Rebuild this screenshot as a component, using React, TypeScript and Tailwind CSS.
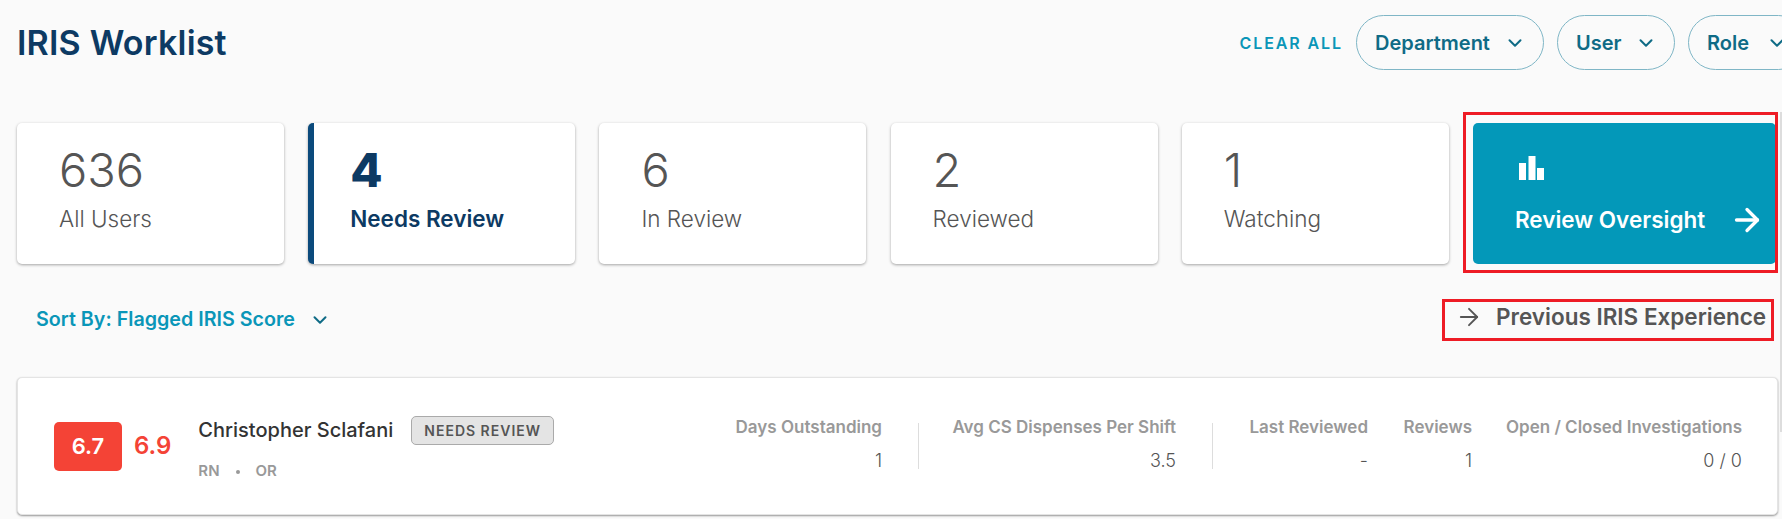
import { ArrowRight, ChevronDown } from "lucide-react";

const font = "font-['Inter','Liberation_Sans',sans-serif]";

const tiles = [
  { count: "636", label: "All Users" },
  { count: "4", label: "Needs Review", active: true },
  { count: "6", label: "In Review" },
  { count: "2", label: "Reviewed" },
  { count: "1", label: "Watching" },
];

const stats = [
  { label: "Days Outstanding", value: "1", width: "w-[200px]", divider: true },
  { label: "Avg CS Dispenses Per Shift", value: "3.5", width: "w-[294px]", divider: true },
  { label: "Last Reviewed", value: "-", width: "w-[155px]" },
  { label: "Reviews", value: "1", width: "w-[104px]" },
  { label: "Open / Closed Investigations", value: "0 / 0", width: "w-[270px]" },
];

function FilterPill({ label, className }: { label: string; className: string }) {
  return (
    <button className={`flex h-[55px] shrink-0 items-center justify-between rounded-full border border-[#7fb6c6] pl-[18px] pr-[17px] text-[20px] font-semibold text-[#0f6b86] ${className}`}>
      {label}
      <ChevronDown className="h-[22px] w-[22px] text-[#0f6b86]" strokeWidth={2.2} />
    </button>
  );
}

function Tile({ count, label, active }: { count: string; label: string; active?: boolean }) {
  return (
    <div
      className={`flex h-[141px] w-[267px] shrink-0 flex-col rounded-[5px] bg-white pt-[22px] shadow-[0_1px_3px_rgba(0,0,0,0.35)] ${
        active ? "border-l-[6px] border-[#0b4a7c] pl-[36px]" : "pl-[42px]"
      }`}
    >
      <span className={`text-[47px] leading-[50px] ${active ? "font-extrabold text-[#0d3a63]" : "font-light text-[#555555]"}`}>{count}</span>
      <span className={`mt-[9px] text-[22.5px] leading-[30px] ${active ? "font-semibold text-[#0d3a63]" : "font-light text-[#555555]"}`}>{label}</span>
    </div>
  );
}

export default function App() {
  return (
    <div className={`relative h-[519px] w-[1782px] overflow-hidden bg-[#fafafa] pl-[17px] ${font}`}>
      <header className="flex h-[85px] items-center justify-between">
        <h1 className="text-[34px] font-semibold tracking-[0.2px] text-[#0d3a63]">IRIS Worklist</h1>
        <div className="-mr-[24px] flex items-center gap-[13px]">
          <button className="text-[16px] font-semibold tracking-[1.9px] text-[#0a96b8]">CLEAR ALL</button>
          <FilterPill label="Department" className="w-[188px]" />
          <FilterPill label="User" className="w-[118px]" />
          <FilterPill label="Role" className="w-[118px]" />
        </div>
      </header>

      <section className="mt-[38px] flex gap-[24.2px]">
        {tiles.map((tile) => (
          <Tile key={tile.label} {...tile} />
        ))}
        <div className="relative flex h-[141px] w-[303px] shrink-0 flex-col justify-between rounded-[5px] bg-[#0398b9] pb-[26px] pl-[42px] pr-[11px] pt-[33px] text-white">
          <svg viewBox="0 0 25 24" className="ml-[4px] h-[24px] w-[25px] fill-white">
            <rect x="0" y="7" width="7" height="17" />
            <rect x="9.5" y="0" width="7" height="24" />
            <rect x="18" y="12" width="7" height="12" />
          </svg>
          <div className="flex items-center justify-between">
            <span className="text-[22.5px] font-semibold">Review Oversight</span>
            <ArrowRight className="h-[36px] w-[36px]" strokeWidth={2.2} />
          </div>
          <div className="pointer-events-none absolute -left-[10px] -top-[11px] h-[161px] w-[315px] border-[3px] border-[#ee1c25]" />
        </div>
      </section>

      <div className="mt-[34px] flex h-[44px] items-center justify-between pl-[19px] pr-[8px]">
        <div className="flex items-center gap-[14px]">
          <span className="text-[19.7px] font-semibold text-[#0a96b8]">Sort By: Flagged IRIS Score</span>
          <ChevronDown className="h-[22px] w-[22px] text-[#0f6b86]" strokeWidth={2.2} />
        </div>
        <div className="relative flex h-[42px] w-[332px] items-center gap-[13px] border-[3px] border-[#ee1c25] pb-[6px] pl-[10px]">
          <ArrowRight className="h-[28px] w-[28px] text-[#555555]" strokeWidth={1.6} />
          <span className="whitespace-nowrap text-[22.5px] font-semibold text-[#555555]">Previous IRIS Experience</span>
        </div>
      </div>

      <article className="mt-[35px] flex h-[138px] w-[1761px] items-center justify-between rounded-[5px] border border-[#e4e4e4] bg-white pl-[36px] pr-[35px] shadow-[0_1px_2px_rgba(0,0,0,0.4)]">
        <div className="flex items-center">
          <span className="flex h-[49px] w-[68px] items-center justify-center rounded-[5px] bg-[#f44336] text-[22px] font-semibold text-white">6.7</span>
          <span className="ml-[12px] text-[24px] font-semibold text-[#f44336]">6.9</span>
          <div className="ml-[27px] mt-[6px] flex flex-col gap-[15px]">
            <div className="flex h-[30px] items-center gap-[18px]">
              <span className="text-[20px] font-medium text-[#333333]">Christopher Sclafani</span>
              <span className="rounded-[5px] border border-[#aaaaaa] bg-[#e4e4e4] px-[12px] py-[3px] text-[14px] font-semibold tracking-[1px] text-[#555555]">NEEDS REVIEW</span>
            </div>
            <div className="flex items-center gap-[16px] text-[15px] font-semibold text-[#999999]">
              <span>RN</span>
              <span className="h-[4px] w-[4px] rounded-full bg-[#999999]" />
              <span>OR</span>
            </div>
          </div>
        </div>
        <div className="flex">
          {stats.map((stat) => (
            <div key={stat.label} className={`flex h-[46px] flex-col items-end justify-between ${stat.width} ${stat.divider ? "border-r border-[#dddddd] pr-[36px]" : ""}`}>
              <span className="-mt-[8px] whitespace-nowrap text-[17px] font-semibold text-[#999999]">{stat.label}</span>
              <span className="-mb-[5px] text-[18px] font-light text-[#555555]">{stat.value}</span>
            </div>
          ))}
        </div>
      </article>

      <div className="absolute right-0 top-[112px] h-[320px] w-[2px] bg-[#dddddd]" />
    </div>
  );
}
